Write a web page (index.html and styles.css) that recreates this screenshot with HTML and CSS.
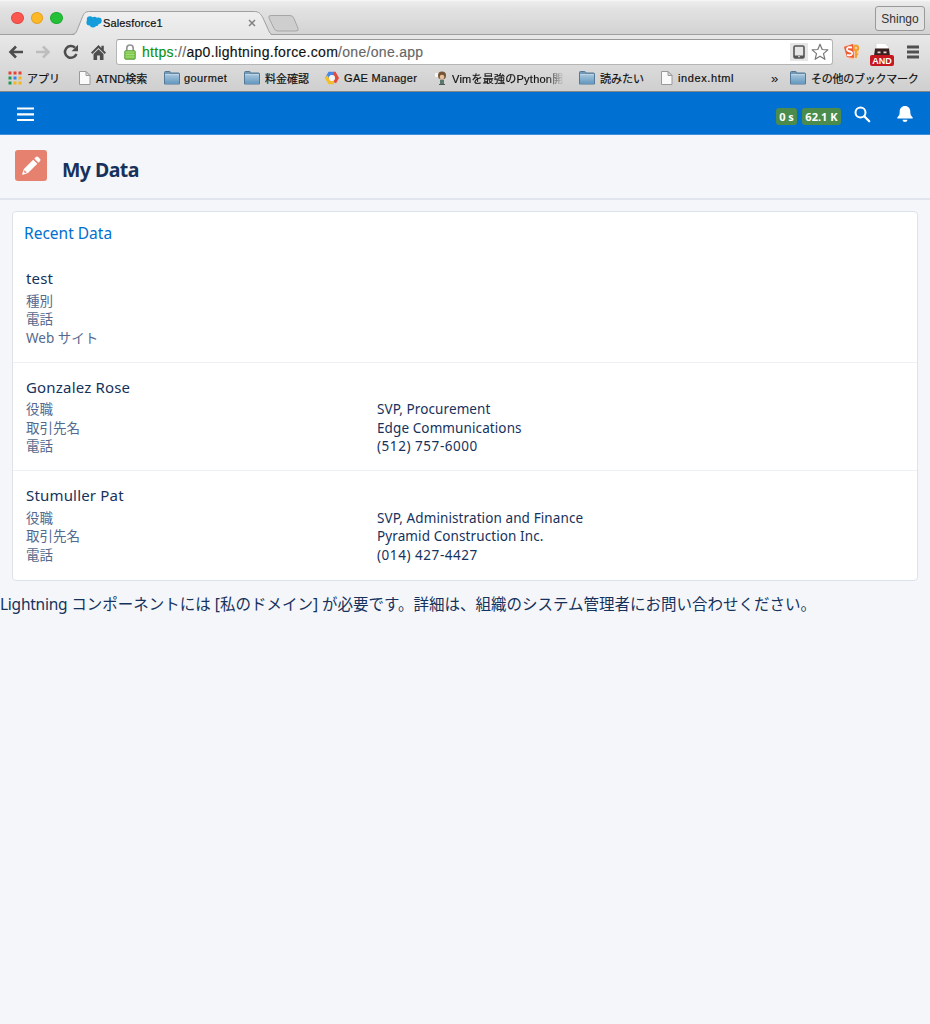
FILE: index.html
```
<!DOCTYPE html>
<html lang="ja">

<head>
    <meta charset="UTF-8">
    <meta name="viewport" content="width=device-width, initial-scale=1">
    <title>Salesforce1</title>
    <link rel="stylesheet" href="styles.css">
</head>

<body>

    <!-- shared icons -->
    <svg class="defs" width="0" height="0">
        <defs>
            <linearGradient id="blue" x1="0" y1="0" x2="0" y2="1">
                <stop offset="0" stop-color="#a2c3dc" />
                <stop offset="1" stop-color="#6396bd" />
            </linearGradient>
            <linearGradient id="tabFill" x1="0" y1="0" x2="0" y2="1">
                <stop offset="0" stop-color="#efefef" />
                <stop offset="1" stop-color="#e7e7e7" />
            </linearGradient>
            <symbol id="folder" viewBox="0 0 16 14">
                <path d="M.5 13V1.500q0-1 1-1h4q.8 0 1 .8l.2.7H14.500q1 0 1 1V13z" fill="#7199b7" stroke="#547895" />
                <path d="M1 4h14v9H1z" fill="url(#blue)" />
                <path d="M1 3.500h14" stroke="#bdd4e5" />
            </symbol>
            <symbol id="file" viewBox="0 0 12 14">
                <path d="M.5.5h6.500l4 4v9H.5z" fill="#fafafa" stroke="#9a9a9a" />
                <path d="M7 .5v4h4z" fill="#ddd" stroke="#9a9a9a" />
            </symbol>
        </defs>
    </svg>

    <div class="browser">
        <div class="tab_strip">
            <div class="lights">
                <span class="light red"></span>
                <span class="light yellow"></span>
                <span class="light green"></span>
            </div>
            <div class="tab">
                <svg class="tab_shape" width="202" height="25" viewBox="0 0 202 25">
                    <path d="M0 24.500C5 24 5 22 7 17L11 7C13 2 14 .5 19 .5H183C188 .5 190 3 192 7L197 18C199 23 200 24.500 202 24.500V25H0z" fill="url(#tabFill)" />
                    <path d="M0 23.500C5 23 5 22 7 17L11 7C13 2 14 .5 19 .5H183C188 .5 190 3 192 7L197 18C199 23 200 23.500 202 23.500" fill="none" stroke="#a0a0a0" />
                </svg>
                <svg class="cloud" width="16" height="12" viewBox="0 0 16 12">
                    <g fill="#159cdb">
                        <circle cx="4" cy="3.500" r="3.200" /><circle cx="8.500" cy="3.500" r="2.800" />
                        <circle cx="12.400" cy="4.800" r="3.300" /><circle cx="3.400" cy="6.600" r="3" />
                        <circle cx="7" cy="8.200" r="3.200" /><circle cx="10" cy="7.400" r="2.600" />
                    </g>
                </svg>
                <span class="tab_title">Salesforce1</span>
                <svg class="tab_close" width="8" height="8" viewBox="0 0 8 8">
                    <path d="M1 1l6 6M7 1L1 7" stroke="#808080" stroke-width="1.500" />
                </svg>
            </div>
            <svg class="new_tab" width="33" height="17" viewBox="0 0 33 17">
                <path d="M4 .5H23q3 0 4 3l4 10q1 2.500-2 2.500H11q-3 0-4-2.500L2 3Q1 .5 4 .5z" fill="#cecece" stroke="#a6a6a6" />
            </svg>
            <div class="user">Shingo</div>
        </div>

        <div class="toolbar">
            <svg class="nav" width="16" height="14" viewBox="0 0 16 14">
                <path d="M15 7H2.500M8 1.500L2.500 7 8 12.500" fill="none" stroke="#4d4d4d" stroke-width="2.600" />
            </svg>
            <svg class="nav forward" width="16" height="14" viewBox="0 0 16 14">
                <path d="M1 7h12.500M8 1.500L13.500 7 8 12.500" fill="none" stroke="#bdbdbd" stroke-width="2.600" />
            </svg>
            <svg class="nav reload" width="16" height="16" viewBox="0 0 16 16">
                <path d="M13.400 10A5.900 5.900 0 1 1 12 3.700" fill="none" stroke="#4d4d4d" stroke-width="2.500" />
                <path d="M15 .8v6.400H8.600z" fill="#4d4d4d" />
            </svg>
            <svg class="nav home" width="15" height="15" viewBox="0 0 15 15">
                <path d="M7.500 0L0 7.600l1.300 1.300L7.500 3l6.200 5.900L15 7.600l-2.200-2.200V.8h-2.400V3z" fill="#4d4d4d" />
                <path d="M7.500 4.300L2.500 9v6h3.600v-4.500h2.800V15h3.600V9z" fill="#4d4d4d" />
            </svg>
            <div class="address">
                <svg width="12" height="16" viewBox="0 0 12 16">
                    <path d="M2.800 8V4.200a3.200 3.200 0 0 1 6.400 0V8" fill="none" stroke="#959595" stroke-width="1.700" />
                    <rect x=".8" y="6.800" width="10.400" height="8.400" rx=".6" fill="#82c94e" stroke="#569c37" />
                    <path d="M1.500 8h9M1.500 10.500h9M1.500 13h9" stroke="#a2dd77" />
                </svg>
                <div class="url"><span class="scheme">https</span><span class="dim">://</span>ap0.lightning.force.com<span class="dim">/one/one.app</span></div>
                <div class="device">
                    <svg width="12" height="14" viewBox="0 0 12 14">
                        <rect x="1" y="1" width="10" height="12" rx="1.200" fill="none" stroke="#555" stroke-width="1.600" />
                        <path d="M1 10.500h10V13H1z" fill="#555" /><path d="M5 11.700h2" stroke="#ddd" />
                    </svg>
                </div>
                <svg class="star" width="18" height="18" viewBox="0 0 18 18">
                    <path d="M9 1.200l2.200 5.300 5.700.4-4.400 3.700 1.400 5.700L9 13.200l-4.900 3.100 1.400-5.700L1.100 6.900l5.700-.4z" fill="#fff" stroke="#777" stroke-width="1.200" stroke-linejoin="round" />
                </svg>
            </div>
            <svg class="ext_s" width="17" height="18" viewBox="0 0 17 18">
                <path d="M1 3l9-2 5 1 1 9-6 6-7-3z" fill="#f9c7a8" />
                <path d="M1 4l9-3 1 14-7-1z" fill="#ef5a36" />
                <path d="M9 4.500Q4 3.500 4 6.200 4 8 7 8.500q2.500.6 2 2.500-.6 2-5 1" fill="none" stroke="#fff" stroke-width="1.800" />
                <circle cx="13" cy="5" r="2.300" fill="none" stroke="#ee9e22" stroke-width="1.700" />
                <path d="M13 7v8M13 11.500h2" stroke="#ee9e22" stroke-width="1.700" />
            </svg>
            <div class="ext_and">
                <svg width="20" height="13" viewBox="0 0 20 13">
                    <path d="M4 6V.3h9l4 4V6z" fill="#fff" stroke="#ccc" stroke-width=".6" />
                    <path d="M3 5.500h14l1 7.500H2z" fill="#392020" />
                    <path d="M5.500 8.500h3v1.800h-3zM11.500 8.500h3v1.800h-3z" fill="#e5d7d1" />
                </svg>
                <span class="and">AND</span>
            </div>
            <svg class="menu" width="12" height="14" viewBox="0 0 12 14">
                <path d="M0 2h12M0 7h12M0 12h12" stroke="#505050" stroke-width="2.800" />
            </svg>
        </div>

        <div class="bookmarks">
            <div class="bookmark apps">
                <svg width="14" height="14" viewBox="0 0 14 14">
                    <path d="M.5.5h3v3h-3zM5.500.5h3v3h-3zM10.500.5h3v3h-3z" fill="#e84235" />
                    <path d="M.5 5.500h3v3h-3z" fill="#1c9a55" /><path d="M5.500 5.500h3v3h-3z" fill="#3c80ee" />
                    <path d="M10.500 5.500h3v3h-3zM5.500 10.500h3v3h-3zM10.500 10.500h3v3h-3z" fill="#f4b51d" />
                    <path d="M.5 10.500h3v3h-3z" fill="#1c9a55" />
                </svg>
                <span>アプリ</span>
            </div>
            <div class="bookmark file"><svg width="12" height="14"><use href="#file" /></svg><span>ATND検索</span></div>
            <div class="bookmark"><svg width="16" height="14"><use href="#folder" /></svg><span class="latin">gourmet</span></div>
            <div class="bookmark"><svg width="16" height="14"><use href="#folder" /></svg><span>料金確認</span></div>
            <div class="bookmark gae">
                <svg width="16" height="14" viewBox="0 0 16 14">
                    <path d="M3 7l2.500-4.500h5" fill="none" stroke="#4787e8" stroke-width="3.500" />
                    <path d="M10 2.500h.5L13 7l-2.500 4.500" fill="none" stroke="#e04b3d" stroke-width="3.500" />
                    <path d="M2 5.500L5.500 11.500H10" fill="none" stroke="#f4bd2c" stroke-width="3.500" />
                    <circle cx="8" cy="7" r="3" fill="#f5f5f5" />
                </svg>
                <span class="latin">GAE Manager</span>
            </div>
            <div class="bookmark vim">
                <svg width="13" height="14" viewBox="0 0 13 14">
                    <path d="M0 2h5v4H0z" fill="#f5f5f5" />
                    <circle cx="7" cy="4.500" r="4" fill="#765536" /><circle cx="7" cy="6" r="2.300" fill="#e8c19b" />
                    <path d="M5 9h4v4H5z" fill="#59776b" /><path d="M4 13.500h6" stroke="#555" />
                </svg>
                <span>Vimを最強のPython開</span>
            </div>
            <div class="bookmark"><svg width="16" height="14"><use href="#folder" /></svg><span>読みたい</span></div>
            <div class="bookmark file"><svg width="12" height="14"><use href="#file" /></svg><span class="latin">index.html</span></div>
            <div class="more">»</div>
            <div class="bookmark"><svg width="16" height="14"><use href="#folder" /></svg><span class="other">その他のブックマーク</span></div>
        </div>
    </div>

    <div class="app_bar">
        <svg width="17" height="15" viewBox="0 0 17 15">
            <path d="M0 1.500h17M0 7.300h17M0 13h17" stroke="#fff" stroke-width="2.200" />
        </svg>
        <span class="badge first">0 s</span>
        <span class="badge">62.1 K</span>
        <svg class="search" width="17" height="17" viewBox="0 0 17 17">
            <circle cx="6.500" cy="6.500" r="5" fill="none" stroke="#fff" stroke-width="2" />
            <path d="M10.200 10.200l5 5" stroke="#fff" stroke-width="2.300" stroke-linecap="round" />
        </svg>
        <svg class="bell" width="16" height="17" viewBox="0 0 16 17">
            <path d="M8 0C4.600 0 2.700 2.500 2.700 5.500c0 3-.7 4.400-2 5.500-.8.8-.5 1.600.4 1.600h13.800c.9 0 1.200-.8.4-1.600-1.300-1.100-2-2.500-2-5.500C13.300 2.500 11.400 0 8 0zM5.500 13.800h5C10.300 15.300 9.300 16 8 16s-2.300-.7-2.500-2.200z" fill="#fff" />
        </svg>
    </div>

    <div class="page_header">
        <div class="page_icon">
            <svg width="20" height="20" viewBox="0 0 20 20">
                <path d="M12.200 3.700l4.100 4.100-9.300 9.300-5.100 1.700c-.6.200-.9-.1-.7-.7L2.900 13z" fill="#fff" />
                <path d="M13.300 2.600l1.500-1.500c.8-.8 1.600-.8 2.400 0l1.700 1.700c.8.8.8 1.600 0 2.400l-1.500 1.500z" fill="#fff" />
                <path d="M3.600 14.300l2.100 2.100-1.800.6-.9-.9z" fill="#e7816f" />
            </svg>
        </div>
        <h1>My Data</h1>
    </div>

    <div class="card">
        <h2>Recent Data</h2>
        <div class="record">
            <h3>test</h3>
            <div class="row"><span class="label">種別</span></div>
            <div class="row"><span class="label">電話</span></div>
            <div class="row"><span class="label">Web サイト</span></div>
        </div>
        <div class="record">
            <h3>Gonzalez Rose</h3>
            <div class="row"><span class="label">役職</span><span class="value">SVP, Procurement</span></div>
            <div class="row"><span class="label">取引先名</span><span class="value">Edge Communications</span></div>
            <div class="row"><span class="label">電話</span><span class="phone">(512) 757-6000</span></div>
        </div>
        <div class="record">
            <h3>Stumuller Pat</h3>
            <div class="row"><span class="label">役職</span><span class="value">SVP, Administration and Finance</span></div>
            <div class="row"><span class="label">取引先名</span><span class="value">Pyramid Construction Inc.</span></div>
            <div class="row"><span class="label">電話</span><span class="phone">(014) 427-4427</span></div>
        </div>
    </div>

    <p class="notice"><span class="lightning">Lightning</span> コンポーネントには [私のドメイン] が必要です。詳細は、組織のシステム管理者にお問い合わせください。</p>

</body>

</html>
```
FILE: styles.css
```
* {
    box-sizing: border-box;
}

body {
    margin: 0;
    min-height: 100vh;
    background: #f4f6f9;
    color: #16325c;
    font-family: "Noto Sans", "Noto Sans CJK JP", sans-serif;
    overflow: hidden;
}

svg {
    display: block;
    flex-shrink: 0;
}

.defs {
    position: absolute;
}

h1, h2, h3, p {
    margin: 0;
    font-weight: 400;
}

/* browser window */
.browser {
    height: 92px;
    background: linear-gradient(#e8e8e8 35px, #cfcfcf);
    border-bottom: 1px solid #858585;
    color: #111;
    font-family: "Liberation Sans", "Noto Sans CJK JP", sans-serif;
    white-space: nowrap;
}

.tab_strip {
    display: flex;
    height: 35px;
    background: linear-gradient(#ededed, #e2e2e2 8px, #d3d3d3);
    border-bottom: 1px solid #a0a0a0;
    border-top: 1px solid #f5f5f5;
}

.lights {
    display: flex;
    gap: 7px;
    width: 71px;
    padding: 11px 0 0 11px;
}

.light {
    width: 12.5px;
    height: 12px;
    border-radius: 50%;
}

.red {
    background: #fc5650;
    border: 1px solid #e44742;
}

.yellow {
    background: #fdb827;
    border: 1px solid #e4a31d;
}

.green {
    background: #24c138;
    border: 1px solid #1baa2d;
}

.tab {
    display: flex;
    position: relative;
    align-items: center;
    width: 202px;
    height: 25px;
    margin-top: 10px;
    padding-left: 15px;
}

.tab_shape {
    position: absolute;
    left: 0;
    top: 0;
}

.cloud {
    position: relative;
    margin-top: -4px;
}

.tab_title {
    position: relative;
    width: 144px;
    margin: -2px 0 0 1px;
    font-size: 11px;
    letter-spacing: 0.15px;
    -webkit-text-stroke: 0.2px;
}

.tab_close {
    position: relative;
    margin: -2px 0 0 1px;
}

.new_tab {
    margin: 14px 0 0 -6px;
}

.user {
    width: 50px;
    height: 25px;
    margin: 5px 5px 0 auto;
    border: 1px solid #999;
    border-radius: 3px;
    background: #e3e3e3;
    font-size: 12px;
    line-height: 25px;
    text-align: center;
    color: #333;
}

.toolbar {
    display: flex;
    align-items: center;
    height: 32px;
    padding: 2px 11px 0 8px;
}

.forward {
    margin-left: 11px;
}

.reload {
    margin-left: 12px;
}

.home {
    margin-left: 12px;
}

.address {
    display: flex;
    align-items: center;
    width: 717px;
    height: 26px;
    margin-left: 10px;
    padding: 0 3px 0 7px;
    background: #fff;
    border: 1px solid #b5b5b5;
    border-top-color: #999;
    border-radius: 3px;
}

.url {
    margin-left: 6px;
    font-size: 14px;
    letter-spacing: 0.3px;
    -webkit-text-stroke: 0.15px;
}

.scheme {
    color: #0b9210;
}

.dim {
    color: #666;
}

.device {
    display: flex;
    align-items: center;
    justify-content: center;
    width: 18px;
    height: 18px;
    margin-left: auto;
    background: #e6e6e6;
}

.star {
    margin-left: 3px;
}

.ext_s {
    margin-left: 10px;
}

.ext_and {
    display: flex;
    flex-direction: column;
    align-items: center;
    width: 24px;
    margin: 5px 0 0 10px;
}

.and {
    width: 24px;
    height: 11px;
    margin-top: -1px;
    border-radius: 2px;
    background: #c5171d;
    color: #fff;
    font-size: 9px;
    font-weight: 700;
    line-height: 12px;
    text-align: center;
}

.menu {
    margin-left: auto;
}

.bookmarks {
    display: grid;
    grid-template-columns: 71px 85px 80px 80px 111px 144px 82px 110px 19px auto;
    align-items: center;
    height: 22px;
    padding-left: 8px;
    font-size: 11px;
}

.bookmark {
    display: flex;
    align-items: center;
    gap: 5px;
}

.bookmark span {
    -webkit-text-stroke: 0.2px;
}

.bookmark .latin {
    margin-left: -1px;
    letter-spacing: 0.42px;
}

.bookmark.file .latin {
    margin-left: 0;
    letter-spacing: 0.6px;
}

.bookmark.gae .latin {
    letter-spacing: 0.32px;
}

.other {
    letter-spacing: -0.25px;
}

.vim {
    gap: 4px;
}

.bookmark.vim span {
    width: 112px;
    overflow: hidden;
    letter-spacing: 0.25px;
    mask-image: linear-gradient(90deg, #000 84%, transparent);
}

.more {
    font-size: 13px;
}

/* salesforce header */
.app_bar {
    display: flex;
    align-items: center;
    height: 43px;
    padding: 2px 17px 0 17px;
    background: #0070d2;
    border-bottom: 1px solid #3c8fda;
}

.badge {
    height: 17px;
    margin: 4px 0 0 5px;
    padding: 0 3.5px;
    border-radius: 3px;
    background: #4b8b4c;
    color: #fff;
    font-size: 11px;
    font-weight: 700;
    line-height: 17px;
}

.first {
    margin-left: auto;
    padding: 0 3px;
}

.search {
    margin: 0 0 0 13px;
}

.bell {
    margin: 0 0 0 26px;
}

.page_header {
    display: flex;
    height: 65px;
    padding: 15px 15px 0;
    border-bottom: 2px solid #e0e5ee;
}

.page_icon {
    display: flex;
    align-items: center;
    justify-content: center;
    width: 32px;
    height: 31px;
    border-radius: 3px;
    background: #e7816f;
}

h1 {
    margin: 6px 0 0 15px;
    font-size: 19.5px;
    font-weight: 700;
    line-height: 28px;
    letter-spacing: -0.55px;
}

.card {
    height: 370px;
    margin: 11px 12px 0;
    background: #fff;
    border: 1px solid #dde2eb;
    border-radius: 4px;
}

h2 {
    height: 42px;
    padding: 10px 11px 0;
    color: #0070d2;
    font-size: 15.5px;
    line-height: 22px;
}

.record {
    height: 108.5px;
    padding: 13px 13px 0;
    border-bottom: 1px solid #edf0f5;
}

.record:last-child {
    border-bottom: none;
}

h3 {
    height: 24.5px;
    font-size: 15px;
    line-height: 22px;
    letter-spacing: 0.18px;
}

.row {
    display: grid;
    grid-template-columns: 351px auto;
    height: 18.5px;
    font-size: 13.5px;
    line-height: 18.5px;
}

.label {
    color: #54698d;
}

.value {
    letter-spacing: 0.1px;
}

.phone {
    letter-spacing: 0.55px;
}

.notice {
    margin-top: 11px;
    font-size: 15.5px;
    line-height: 24px;
    white-space: nowrap;
}

.lightning {
    letter-spacing: -0.25px;
}
```
